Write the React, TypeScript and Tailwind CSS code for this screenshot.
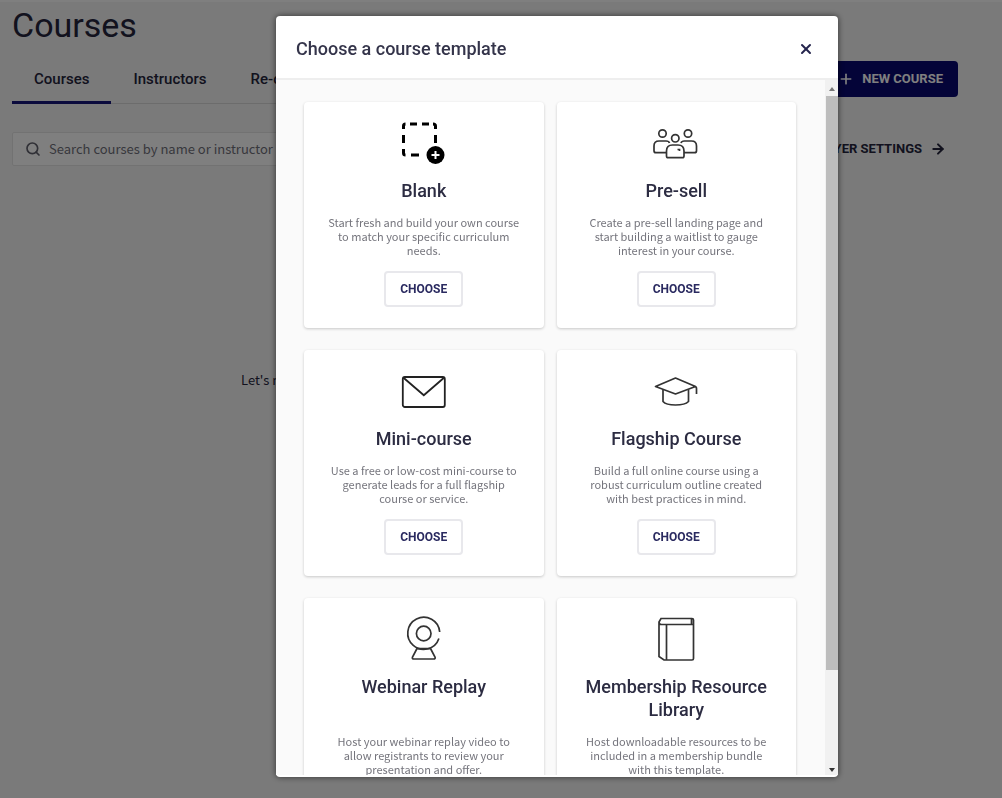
import type { ReactNode } from 'react';
import { ArrowRight, Plus, Search, X } from 'lucide-react';

interface Template {
  title: string;
  description: string;
  icon: ReactNode;
}

const templates: Template[] = [
  {
    title: 'Blank',
    description: 'Start fresh and build your own course to match your specific curriculum needs.',
    icon: (
      <svg className="size-12" viewBox="0 0 48 48" fill="none" stroke="#000" strokeWidth={3}>
        <path d="M3.5 11V8q0-2 2-2M10 6h7M22 6h7M33 6q2.500 0 2.500 2v3M35.500 17v8M3.500 17v8M3.500 31v4q0 2 2 2M11 37h8" />
        <circle cx="35.500" cy="37" r="9" fill="#000" stroke="none" />
        <path d="M31.500 37h8M35.500 33v8" stroke="#fff" strokeWidth={2} />
      </svg>
    ),
  },
  {
    title: 'Pre-sell',
    description: 'Create a pre-sell landing page and start building a waitlist to gauge interest in your course.',
    icon: (
      <svg className="size-12" viewBox="0 0 48 48" fill="none" stroke="#333" strokeWidth={1.7}>
        <circle cx="10.500" cy="15.500" r="3.700" />
        <circle cx="36" cy="15.500" r="3.700" />
        <circle cx="23.300" cy="20.300" r="3.700" />
        <path d="M14.500 34.700H4q-2 0-2-2V28q0-5 5-5h7q3 0 3.500 2M32 34.700h10.500q2 0 2-2V28q0-5-5-5h-7q-3 0-3.500 2" />
        <path d="M14.500 38V33q0-6 6-6h5.500q6 0 6 6v5q0 1.700-1.700 1.700H16.200q-1.700 0-1.700-1.700z" />
        <path d="M25.500 31.500h2v1.500" />
      </svg>
    ),
  },
  {
    title: 'Mini-course',
    description: 'Use a free or low-cost mini-course to generate leads for a full flagship course or service.',
    icon: (
      <svg className="size-12" viewBox="0 0 48 48" fill="none" stroke="#222" strokeWidth={1.8}>
        <rect x="2.800" y="11" width="42" height="30" rx="2" />
        <path d="M3.500 11.700 23.800 29.300 44 11.700" />
      </svg>
    ),
  },
  {
    title: 'Flagship Course',
    description: 'Build a full online course using a robust curriculum outline created with best practices in mind.',
    icon: (
      <svg className="size-12" viewBox="0 0 48 48" fill="none" stroke="#333" strokeWidth={1.7} strokeLinejoin="round">
        <path d="M3.500 20.500 23.500 12l20 8.500-20 7.500z" />
        <path d="M11 23.500v12q3 3.500 12.500 3.500T36.500 35.500v-12M42.500 20.500q2 0 2 2V28" />
      </svg>
    ),
  },
  {
    title: 'Webinar Replay',
    description: 'Host your webinar replay video to allow registrants to review your presentation and offer.',
    icon: (
      <svg className="size-12" viewBox="0 0 48 48" fill="none" stroke="#333" strokeWidth={1.7}>
        <path d="M39.700 18a16 16 0 1 0-.8 6.500" />
        <circle cx="23.700" cy="19.500" r="7.300" />
        <path d="M17 34.500 12.500 43q-.8 2 1.500 2h19.500q2.300 0 1.500-2l-4.500-8.500M16.500 34.700h14.500" />
      </svg>
    ),
  },
  {
    title: 'Membership Resource Library',
    description: 'Host downloadable resources to be included in a membership bundle with this template.',
    icon: (
      <svg className="size-12" viewBox="0 0 48 48" fill="none" stroke="#333" strokeWidth={1.7}>
        <path d="M41 10.500H9.500Q7 10.500 7 8l2-3.500h31q1.500 0 1.500 1.500v38.500q0 1.500-1.500 1.500H12l-5-3.500V8M14.500 10.500V46M39.500 4.500v6" />
      </svg>
    ),
  },
];

const tabs = ['Courses', 'Instructors', 'Re-order'];

function TemplateCard({ title, description, icon }: Template) {
  return (
    <li className="flex flex-col items-center rounded bg-white px-[22px] pt-4 pb-[21px] text-center shadow-[0_1px_3px_rgba(0,0,0,0.2)]">
      {icon}
      <h3 className="mt-[13px] flex-1 text-lg leading-[23px] font-medium text-[#2c2c42]">{title}</h3>
      <p className="mt-[13px] font-['Noto_Sans_CJK_JP',sans-serif] text-[11px] leading-[14px] text-[#74747c]">
        {description}
      </p>
      <button
        type="button"
        className="mt-[14px] h-9 rounded border-2 border-[#e8e8ec] bg-white px-[14px] text-xs font-bold text-[#2a2a60]"
      >
        CHOOSE
      </button>
    </li>
  );
}

function CoursesPage() {
  return (
    <main className="min-h-screen border-t-2 border-white bg-[#f4f4f4] pr-11 pl-3 text-[#24243c]">
      <h1 className="pt-[3px] text-[34px] leading-10">Courses</h1>

      <div className="mt-[9px] flex items-center">
        <nav className="flex h-[50px] flex-1 border-b border-[#d8d8d8]">
          {tabs.map((tab, i) => (
            <a
              key={tab}
              href="#"
              className={
                i === 0
                  ? 'h-[50px] border-b-3 border-[#16167a] px-[22px] pt-[15px] text-[15px] leading-5 font-medium'
                  : 'px-[22px] pt-[15px] text-[15px] leading-5 font-medium'
              }
            >
              {tab}
            </a>
          ))}
        </nav>
        <button
          type="button"
          className="flex h-9 items-center gap-2 rounded bg-[#080870] px-[15px] text-[13px] font-bold text-white"
        >
          <Plus className="size-4" strokeWidth={2.5} />
          NEW COURSE
        </button>
      </div>

      <div className="mt-7 flex items-center justify-between gap-6">
        <label className="flex h-[34px] w-96 items-center gap-2 rounded-xs border border-[#e4e4e4] bg-white px-3">
          <Search className="size-4 shrink-0 text-[#60606c]" strokeWidth={2.5} />
          <input
            type="search"
            aria-label="Search courses"
            placeholder="Search courses by name or instructor"
            className="w-full bg-transparent font-['Noto_Sans_CJK_JP',sans-serif] text-[13px] outline-none placeholder:text-[#70707a]"
          />
        </label>
        <a href="#" className="flex items-center gap-2 pr-3 text-[13px] font-bold">
          COURSE PLAYER SETTINGS
          <ArrowRight className="size-4" strokeWidth={3} />
        </a>
      </div>

      <p className="mt-[204px] pl-[229px] font-['Noto_Sans_CJK_JP',sans-serif] text-[13px] leading-5">
        Let&apos;s make your first course!
      </p>
    </main>
  );
}

export default function App() {
  return (
    <div className="font-[Roboto,sans-serif]">
      <CoursesPage />

      {/* Template picker */}
      <div className="fixed inset-0 flex bg-black/50 pt-4 pr-[164px] pb-[21px] pl-[276px]">
        <section
          role="dialog"
          aria-modal="true"
          aria-labelledby="dialog-title"
          className="flex flex-1 flex-col rounded bg-white pb-0.5 shadow-[0_0_6px_rgba(0,0,0,0.6)]"
        >
          <header className="flex h-16 shrink-0 items-center justify-between border-b-2 border-[#eeeeee] px-5 pt-1">
            <h2 id="dialog-title" className="text-lg font-medium text-[#34344a]">
              Choose a course template
            </h2>
            <button type="button" aria-label="Close" className="p-1 text-[#24244c]">
              <X className="size-4" strokeWidth={3} />
            </button>
          </header>

          <div className="flex min-h-0 flex-1 bg-[#fafafa]">
            <div className="flex-1 overflow-y-auto py-[22px] pr-[29px] pl-7 [scrollbar-width:none]">
              <ul className="grid grid-cols-2 gap-x-[13px] gap-y-[22px]">
                {templates.map((template) => (
                  <TemplateCard key={template.title} {...template} />
                ))}
              </ul>
            </div>

            {/* Scrollbar */}
            <div className="flex w-[13px] flex-col items-center bg-[#f1f1f1]" aria-hidden="true">
              <svg className="h-4 w-2 shrink-0" viewBox="0 0 8 16" fill="#777">
                <path d="M1 11h6L4 7z" />
              </svg>
              <div className="w-3 flex-[575] bg-[#bdbdbd]" />
              <div className="flex-[89]" />
              <svg className="h-4 w-2 shrink-0" viewBox="0 0 8 16" fill="#333">
                <path d="M1 9h6l-3 4z" />
              </svg>
            </div>
          </div>
        </section>
      </div>
    </div>
  );
}
